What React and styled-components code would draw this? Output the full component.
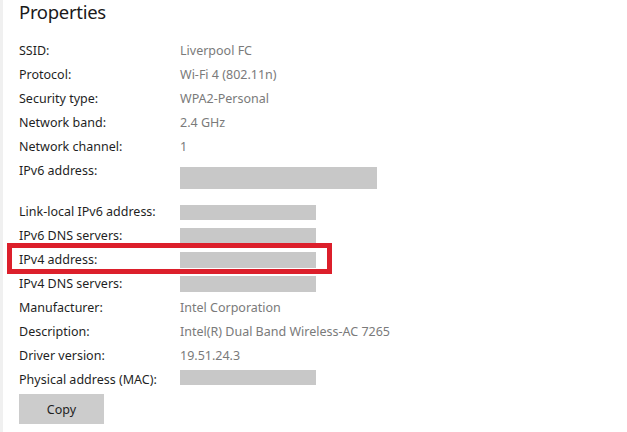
import React from "react";
import styled, { createGlobalStyle } from "styled-components";

const Global = createGlobalStyle`
  html, body { margin: 0; padding: 0; background: #fff; }
  body { font-family: "Noto Sans", "Open Sans", sans-serif; }
`;

const Page = styled.div`
  width: 627px;
  height: 432px;
  box-sizing: border-box;
  border-left: 3px solid #f0f0f0;
  padding-left: 16px;
  overflow: hidden;
`;

const Title = styled.h2`
  margin: 0;
  height: 39px;
  font-size: 18.5px;
  font-weight: 400;
  letter-spacing: -0.3px;
  line-height: 24px;
  color: #1a1a1a;
`;

const Row = styled.div`
  position: relative;
  display: grid;
  grid-template-columns: 161px 1fr;
  align-items: ${(p) => (p.$top ? "start" : "center")};
  height: ${(p) => p.$h || 24}px;
`;

const Label = styled.span`
  font-size: 12.5px;
  line-height: 24px;
  color: #1f1f1f;
  white-space: nowrap;
`;

const Value = styled.span`
  font-size: 12.5px;
  line-height: 24px;
  color: #7a7a7a;
  white-space: nowrap;
`;

const Redacted = styled.div`
  width: ${(p) => p.$w}px;
  height: ${(p) => p.$h}px;
  margin-top: ${(p) => p.$mt || 0}px;
  align-self: ${(p) => p.$self || "center"};
  background: #c8c8c8;
`;

const Highlight = styled.div`
  position: absolute;
  left: -12px;
  top: -5px;
  width: 325px;
  height: 31px;
  box-sizing: border-box;
  border: 5px solid #dc1f2b;
  pointer-events: none;
`;

const CopyButton = styled.button`
  margin-top: 2px;
  width: 85px;
  height: 30px;
  border: none;
  background: #cccccc;
  font-family: inherit;
  font-size: 12.5px;
  color: #1f1f1f;
  padding: 0;
`;

const info = [
  ["SSID:", "Liverpool FC"],
  ["Protocol:", "Wi-Fi 4 (802.11n)"],
  ["Security type:", "WPA2-Personal"],
  ["Network band:", "2.4 GHz"],
  ["Network channel:", "1"],
];

const hw = [
  ["Manufacturer:", "Intel Corporation"],
  ["Description:", "Intel(R) Dual Band Wireless-AC 7265"],
  ["Driver version:", "19.51.24.3"],
];

export default function App() {
  return (
    <>
      <Global />
      <Page>
        <Title>Properties</Title>
        {info.map(([l, v]) => (
          <Row key={l}>
            <Label>{l}</Label>
            <Value>{v}</Value>
          </Row>
        ))}
        <Row $h={41} $top>
          <Label>IPv6 address:</Label>
          <Redacted $w={197} $h={22} $mt={8} $self="start" />
        </Row>
        <Row>
          <Label>Link-local IPv6 address:</Label>
          <Redacted $w={136} $h={15} />
        </Row>
        <Row>
          <Label>IPv6 DNS servers:</Label>
          <Redacted $w={136} $h={16} />
        </Row>
        <Row>
          <Highlight />
          <Label>IPv4 address:</Label>
          <Redacted $w={136} $h={16} />
        </Row>
        <Row>
          <Label>IPv4 DNS servers:</Label>
          <Redacted $w={136} $h={16} />
        </Row>
        {hw.map(([l, v]) => (
          <Row key={l}>
            <Label>{l}</Label>
            <Value>{v}</Value>
          </Row>
        ))}
        <Row>
          <Label>Physical address (MAC):</Label>
          <Redacted $w={136} $h={15} $mt={-5} />
        </Row>
        <CopyButton>Copy</CopyButton>
      </Page>
    </>
  );
}
